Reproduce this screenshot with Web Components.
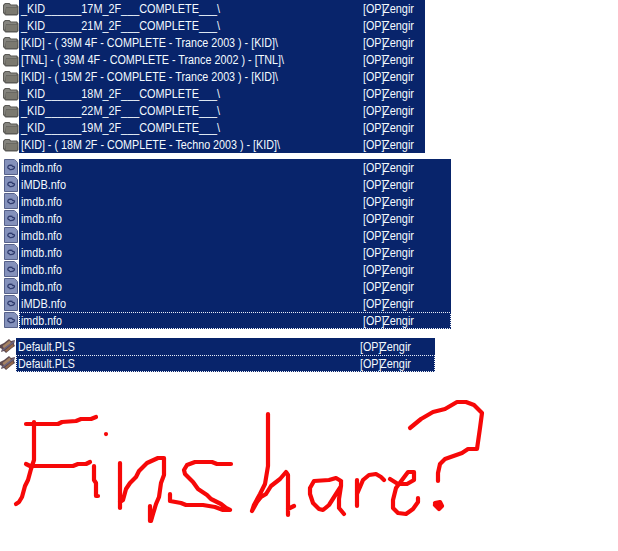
<!DOCTYPE html>
<html><head><meta charset="utf-8"><title>Shared files</title>
<style>body{margin:0;background:#fff;width:618px;height:551px;overflow:hidden}</style></head><body>
<share-board></share-board>
<script>
const icons={
folder:`<svg width="19" height="17" viewBox="0 0 19 17"><path d="M3 13V5L5 3H9.500L11 4.500H17L18.500 6.500V14L17 15.500H5.500Z" fill="#5b5a56"/><path d="M4 12V5.500L5.500 4H9L10.500 5.500H16.500V7H6L5 13Z" fill="#85847e"/><path d="M5.500 14L6.200 7.500H17.500L17 14Z" fill="#7b7970"/></svg>`,
file:`<svg width="19" height="17" viewBox="0 0 19 17"><path d="M4.500 .5H14.500L17.500 3.500V15.500H4.500Z" fill="#8491bb" stroke="#56618a"/><path d="M14.500 0H18V3.500Z" fill="#eef0f7"/><path d="M12.500 6.500Q8 5.500 7.800 8.300Q8 10 10 9.800M9.500 10.500Q14.300 11 14.500 8.300Q14 7 12 7.500" fill="none" stroke="#2f3b6e" stroke-width="1.300"/></svg>`,
playlist:`<svg width="16" height="17" viewBox="0 0 16 17"><path d="M0 7L4 5L9 1L11 3L15 2L14 6L15 8L12 10L6 15L4 13L1 14L2 11L0 10Z" fill="#5f4a50"/><path d="M2.500 8L9.500 2.500L11 5L4 10.500Z" fill="#a58263"/><path d="M5 12.500L12.500 6L13.500 8L6.500 13.700Z" fill="#94694a"/><path d="M2 12.500L14 3.500" stroke="#6c6685" stroke-width="1.300"/></svg>`};
customElements.define('file-row',class extends HTMLElement{
connectedCallback(){
 const g=n=>this.getAttribute(n);
 const r=this.attachShadow({mode:'open'});
 r.innerHTML=`<style>:host{display:grid;grid-template-columns:var(--icon) 1fr;height:17px;font:12px/17px "Liberation Sans",Arial,sans-serif;color:#f4fbff}
 svg{display:block}.bar{display:grid;grid-template-columns:var(--name) 20px 1fr;background:#08246b;white-space:pre;padding-left:2px;height:17px;position:relative}
 :host([dotted]) .bar::after{content:"";position:absolute;inset:0;--h:repeating-linear-gradient(90deg,#e8edf8 0 1px,#08246b 1px 2px);--v:repeating-linear-gradient(180deg,#e8edf8 0 1px,#08246b 1px 2px);background:var(--h) 0 0/100% 1px no-repeat,var(--h) 0 100%/100% 1px no-repeat,var(--v) 0 0/1px 100% no-repeat,var(--v) 100% 0/1px 100% no-repeat}
 span{display:block;width:max-content;transform-origin:0 0;padding-top:1px}</style>${icons[g('icon')]}<div class="bar"><span class="n"></span><span class="o">[OP]</span><span class="z">Zengir</span></div>`;
 const fit=(el,w)=>{el.style.transform='scaleX('+w/el.getBoundingClientRect().width+')'};
 const n=r.querySelector('.n');n.textContent=g('name');fit(n,+g('w'));fit(r.querySelector('.o'),21.5);fit(r.querySelector('.z'),31);
}});
customElements.define('file-list',class extends HTMLElement{
connectedCallback(){this.attachShadow({mode:'open'}).innerHTML=`<style>:host{display:flex;flex-direction:column}</style><slot></slot>`}});
customElements.define('pen-note',class extends HTMLElement{
connectedCallback(){this.attachShadow({mode:'open'}).innerHTML=`<style>:host{display:block}svg{display:block}</style>
<svg width="618" height="179" viewBox="0 372 618 179" fill="none" stroke="#f60808" stroke-width="4.200" stroke-linecap="round" stroke-linejoin="round">
<path d="M26 424H58L62 422L76 421L81 419L91 419L96 417M34 422V460L31 469L28 480L25 486L22 497L19 502L16 504M26 464L30 466H73L78 464L86 464L90 462M94 466V480L96 483V496H98"/><path d="M106 434V434.100"/>
<path d="M120 463V508M120 502L123 500L126 489L130 483L136 477L139 471L147 463L158 458H164V475L161 483L159 497L156 504L153 514L151 521H150V506"/>
<path d="M231 464H217L212 462H195L187 465L184 470L185 474L193 482L198 489L207 495L211 499L221 504L226 508L230 510H223L215 507L203 505H186L181 503L170 501V494"/>
<path d="M268 414V466L265 484L260 494L254 505L252 511L257 502L261 497L266 494L271 486L280 479L286 472L288 475V515M288 509L294 506"/>
<path d="M341 481L336 478L329 480L314 481L310 488V494L313 503L319 509L323 510L329 505L336 494L341 486V481M341 486L339 499V508L344 514M357 480V506M357 494L363 480L369 475L376 474L381 477L384 480M390 479L398 484L407 484L414 480V472H408L402 480L396 488L393 500V508L398 513L406 514L413 509L418 502V498"/>
<path d="M410 428L421 419L433 412L445 409L457 402H466L474 405L482 413L480 428L477 449H468L462 453L445 459L440 464L438 473V481"/>
<path d="M435 503L440 502L442 506L439 509L435 505" fill="#f60808"/></svg>`}});
customElements.define('share-board',class extends HTMLElement{
connectedCallback(){
 const row=(i,n,w,d)=>`<file-row icon="${i}" name="${n}" w="${w}" ${d?'dotted':''}></file-row>`;
 const U='_KID______',C='M_2F___COMPLETE___\\';
 const a=[[U+'17'+C,199],[U+'21'+C,199],['[KID] - ( 39M 4F - COMPLETE - Trance 2003 ) - [KID]\\',257],['[TNL] - ( 39M 4F - COMPLETE - Trance 2002 ) - [TNL]\\',263],['[KID] - ( 15M 2F - COMPLETE - Trance 2003 ) - [KID]\\',257],[U+'18'+C,199],[U+'22'+C,199],[U+'19'+C,199],['[KID] - ( 18M 2F - COMPLETE - Techno 2003 ) - [KID]\\',259]];
 const b=[0,1,0,0,0,0,0,0,1,0];
 this.attachShadow({mode:'open'}).innerHTML=`<style>:host{display:block}file-list{--icon:19px;--name:342px}.a{width:425px}.b{width:451px;margin-top:6px}.c{width:435px;margin-top:9px;--icon:16px}</style>
 <file-list class="a">${a.map(x=>row('folder',...x)).join('')}</file-list>
 <file-list class="b">${b.map((x,i)=>row('file',x?'iMDB.nfo':'imdb.nfo',x?45:41,i>8)).join('')}</file-list>
 <file-list class="c">${row('playlist','Default.PLS',57)+row('playlist','Default.PLS',57,1)}</file-list><pen-note></pen-note>`;
}});
</script></body></html>
